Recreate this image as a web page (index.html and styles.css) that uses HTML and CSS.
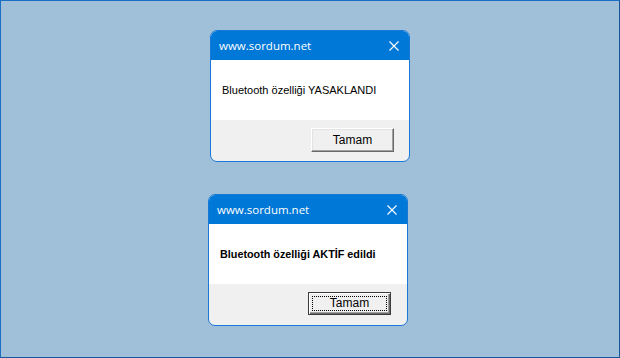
FILE: index.html
```html
<!DOCTYPE html>
<html lang="tr">
<head>
    <meta charset="UTF-8">
    <meta name="viewport" content="width=device-width, initial-scale=1.0">
    <title>Bluetooth</title>
    <link rel="stylesheet" href="styles.css">
</head>
<body>
    <div id="desktop">
        <div class="dialog first">
            <div class="titlebar">
                <span class="title">www.sordum.net</span>
                <svg class="close" width="10" height="10" viewBox="0 0 10 10">
                    <path d="M0.5 0.5 L9.5 9.5 M9.5 0.5 L0.5 9.5" stroke="#fff" stroke-width="1.1" fill="none"/>
                </svg>
            </div>
            <div class="message">Bluetooth özelliği YASAKLANDI</div>
            <div class="footer">
                <button class="btn">Tamam</button>
            </div>
        </div>
        <div class="dialog second">
            <div class="titlebar">
                <span class="title">www.sordum.net</span>
                <svg class="close" width="10" height="10" viewBox="0 0 10 10">
                    <path d="M0.5 0.5 L9.5 9.5 M9.5 0.5 L0.5 9.5" stroke="#fff" stroke-width="1.1" fill="none"/>
                </svg>
            </div>
            <div class="message bold">Bluetooth özelliği AKTİF edildi</div>
            <div class="footer">
                <button class="btn focused"><span>Tamam</span></button>
            </div>
        </div>
    </div>
</body>
</html>
```

FILE: styles.css
```css
html, body {
    margin: 0;
    padding: 0;
}
body {
    font-family: "Liberation Sans", Arial, sans-serif;
    background-color: #a0bfd8;
}
#desktop {
    box-sizing: border-box;
    width: 620px;
    height: 358px;
    border: 1px solid #1c6ec4;
    border-right-color: #17569a;
    border-bottom-color: #17569a;
    background-color: #a0bfd8;
    padding-top: 29px;
    display: flex;
    flex-direction: column;
    gap: 32px;
}
.dialog {
    box-sizing: border-box;
    width: 200px;
    height: 132px;
    border: 1px solid #1a78d6;
    border-radius: 7px;
    background-color: #f0f0f0;
    overflow: hidden;
    display: flex;
    flex-direction: column;
}
.first {
    margin-left: 209px;
}
.second {
    margin-left: 207px;
}
.titlebar {
    height: 29px;
    background-color: #0078d7;
    display: flex;
    align-items: center;
    justify-content: space-between;
    padding: 0 10px 0 8px;
}
.title {
    color: #fff;
    font-family: "Open Sans", "Noto Sans", sans-serif;
    font-size: 11.5px;
}
.close {
    display: block;
}
.message {
    height: 60px;
    background-color: #fff;
    display: flex;
    align-items: center;
    padding-left: 11px;
    font-size: 11px;
    color: #000;
}
.message.bold {
    font-weight: bold;
    font-size: 10.8px;
}
.footer {
    flex: 1;
    display: flex;
    justify-content: flex-end;
    align-items: flex-start;
    padding: 8px 15px 0 0;
}
.second .footer {
    padding-right: 16px;
}
.btn {
    box-sizing: border-box;
    width: 83px;
    height: 24px;
    margin: 0;
    padding: 0;
    font-family: "Liberation Sans", Arial, sans-serif;
    font-size: 12px;
    color: #000;
    background-color: #f0f0f0;
    border: 1px solid;
    border-color: #fff #696969 #696969 #fff;
    box-shadow: inset -1px -1px 0 #a0a0a0, inset 1px 1px 0 #e3e3e3;
}
.btn.focused {
    height: 23px;
    border: 1px solid #3c3c3c;
    box-shadow: inset 1px 1px 0 #fff, inset -1px -1px 0 #696969, inset -2px -2px 0 #a0a0a0;
    padding: 3px;
}
.btn.focused span {
    display: block;
    height: 100%;
    box-sizing: border-box;
    border: 1px dotted #000;
    line-height: 13px;
}
```
